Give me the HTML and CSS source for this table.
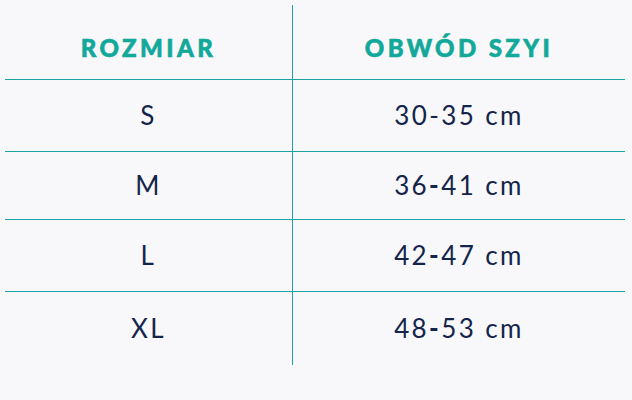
FILE: index.html
```html
<!DOCTYPE html>
<html lang="pl">
<head>
<meta charset="utf-8">
<title>Tabela rozmiarów</title>
<link rel="stylesheet" href="styles.css">
</head>
<body>
<table class="sizes">
  <thead>
    <tr class="head-row">
      <th class="col-size">ROZMIAR</th>
      <th class="col-val">OBWÓD SZYI</th>
    </tr>
  </thead>
  <tbody>
    <tr class="r1"><td class="col-size">S</td><td class="col-val">30-35 cm</td></tr>
    <tr class="r2"><td class="col-size">M</td><td class="col-val">36<b class="dash">-</b>41 cm</td></tr>
    <tr class="r3"><td class="col-size">L</td><td class="col-val">42<b class="dash">-</b>47 cm</td></tr>
    <tr class="r4 last"><td class="col-size">XL</td><td class="col-val">48<b class="dash">-</b>53 cm</td></tr>
  </tbody>
</table>
</body>
</html>
```
FILE: styles.css
```css
html, body {
  margin: 0;
  padding: 0;
  background: #f8f8fa;
}
body {
  padding: 5px 0 0 5px;
  font-family: Lato, "DejaVu Sans", sans-serif;
}
.sizes {
  width: 620px;
  border-collapse: collapse;
  border-spacing: 0;
}
.sizes th, .sizes td {
  padding: 0;
  text-align: center;
  vertical-align: middle;
}
.col-size {
  width: 287px;
  border-right: 1px solid #1aa3a3;
}
.head-row th {
  height: 64px;
  padding-top: 10px;
  border-bottom: 1px solid #1aa3a3;
  color: #12a89a;
  font-weight: 900;
  font-size: 24px;
  letter-spacing: 3.4px;
  -webkit-text-stroke: 0.6px #12a89a;
}
.sizes td {
  color: #14244b;
  font-size: 26px;
  letter-spacing: 2.4px;
  border-bottom: 1px solid #1aa3a3;
  padding-bottom: 1px;
}
.r1 td { height: 70px; }
.r2 td { height: 66px; }
.r3 td { height: 70px; }
.r4 td { height: 72px; border-bottom: none; }
.dash {
  font-weight: 900;
}
```
